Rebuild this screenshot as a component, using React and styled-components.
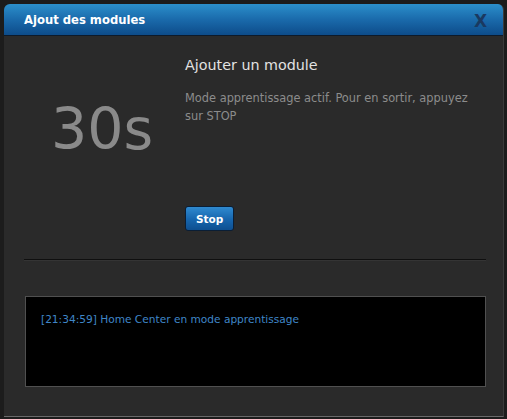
import React from 'react';
import styled, { createGlobalStyle } from 'styled-components';

const GlobalStyle = createGlobalStyle`
  html, body {
    margin: 0;
    padding: 0;
    background-color: #1c1c1c;
  }
  body {
    font-family: 'DejaVu Sans', Verdana, sans-serif;
  }
`;

const Page = styled.div`
  width: 507px;
  height: 419px;
  padding: 4px 3px 3px 4px;
  box-sizing: border-box;
`;

const Modal = styled.div`
  width: 500px;
  height: 413px;
  display: flex;
  flex-direction: column;
  background-color: #2a2a2a;
  border-radius: 6px 6px 0 0;
  border-bottom: 1px solid #6a6a6a;
  border-right: 1px solid #3a3a3a;
  box-sizing: border-box;
  overflow: hidden;
`;

const Header = styled.div`
  height: 31px;
  flex-shrink: 0;
  display: flex;
  align-items: center;
  justify-content: space-between;
  padding: 0 16px 0 20px;
  background: linear-gradient(to bottom, #2b8fcb 0%, #1a6aab 50%, #0d4c8a 100%);
  border-bottom: 1px solid #0d1a2a;
`;

const Title = styled.h1`
  margin: 0;
  font-size: 11.6px;
  font-weight: bold;
  color: #ffffff;
`;

const Close = styled.span`
  font-size: 17px;
  font-weight: bold;
  color: #1a3960;
  margin-top: 3px;
`;

const Body = styled.div`
  flex: 1;
  display: flex;
  flex-direction: column;
  padding: 0 17px 0 20px;
`;

const Top = styled.div`
  display: flex;
  height: 223px;
`;

const Counter = styled.div`
  width: 161px;
  padding: 65px 0 0 27px;
  box-sizing: border-box;
  font-size: 57px;
  color: #8a8a8a;
  line-height: 1;
`;

const Info = styled.div`
  flex: 1;
  display: flex;
  flex-direction: column;
  padding-top: 21px;
`;

const Heading = styled.h2`
  margin: 0;
  font-size: 14.3px;
  font-weight: normal;
  color: #e2e2e2;
`;

const Text = styled.p`
  margin: 16px 0 0 0;
  max-width: 292px;
  font-size: 11.4px;
  line-height: 18px;
  color: #8c8c8c;
`;

const Button = styled.button`
  align-self: flex-start;
  margin-top: 81px;
  height: 25px;
  padding: 0 10px;
  border: 1px solid #0a1e35;
  border-radius: 3px;
  background: linear-gradient(to bottom, #2f8ad0 0%, #1665ad 55%, #0e4f90 100%);
  color: #ffffff;
  font-family: 'DejaVu Sans', Verdana, sans-serif;
  font-size: 10.5px;
  font-weight: bold;
  cursor: pointer;
`;

const Separator = styled.hr`
  margin: 0;
  border: none;
  border-top: 1px solid #0f0f0f;
  border-bottom: 1px solid #343434;
`;

const Log = styled.div`
  margin: 35px 0 0 1px;
  height: 91px;
  background-color: #000000;
  border: 1px solid #505050;
  box-sizing: border-box;
  padding: 16px 15px;
`;

const LogLine = styled.div`
  font-size: 10.6px;
  color: #3f86c8;
`;

export default function App() {
  return (
    <>
      <GlobalStyle />
      <Page>
        <Modal>
          <Header>
            <Title>Ajout des modules</Title>
            <Close>X</Close>
          </Header>
          <Body>
            <Top>
              <Counter>30s</Counter>
              <Info>
                <Heading>Ajouter un module</Heading>
                <Text>
                  Mode apprentissage actif. Pour en sortir, appuyez sur STOP
                </Text>
                <Button>Stop</Button>
              </Info>
            </Top>
            <Separator />
            <Log>
              <LogLine>[21:34:59] Home Center en mode apprentissage</LogLine>
            </Log>
          </Body>
        </Modal>
      </Page>
    </>
  );
}
